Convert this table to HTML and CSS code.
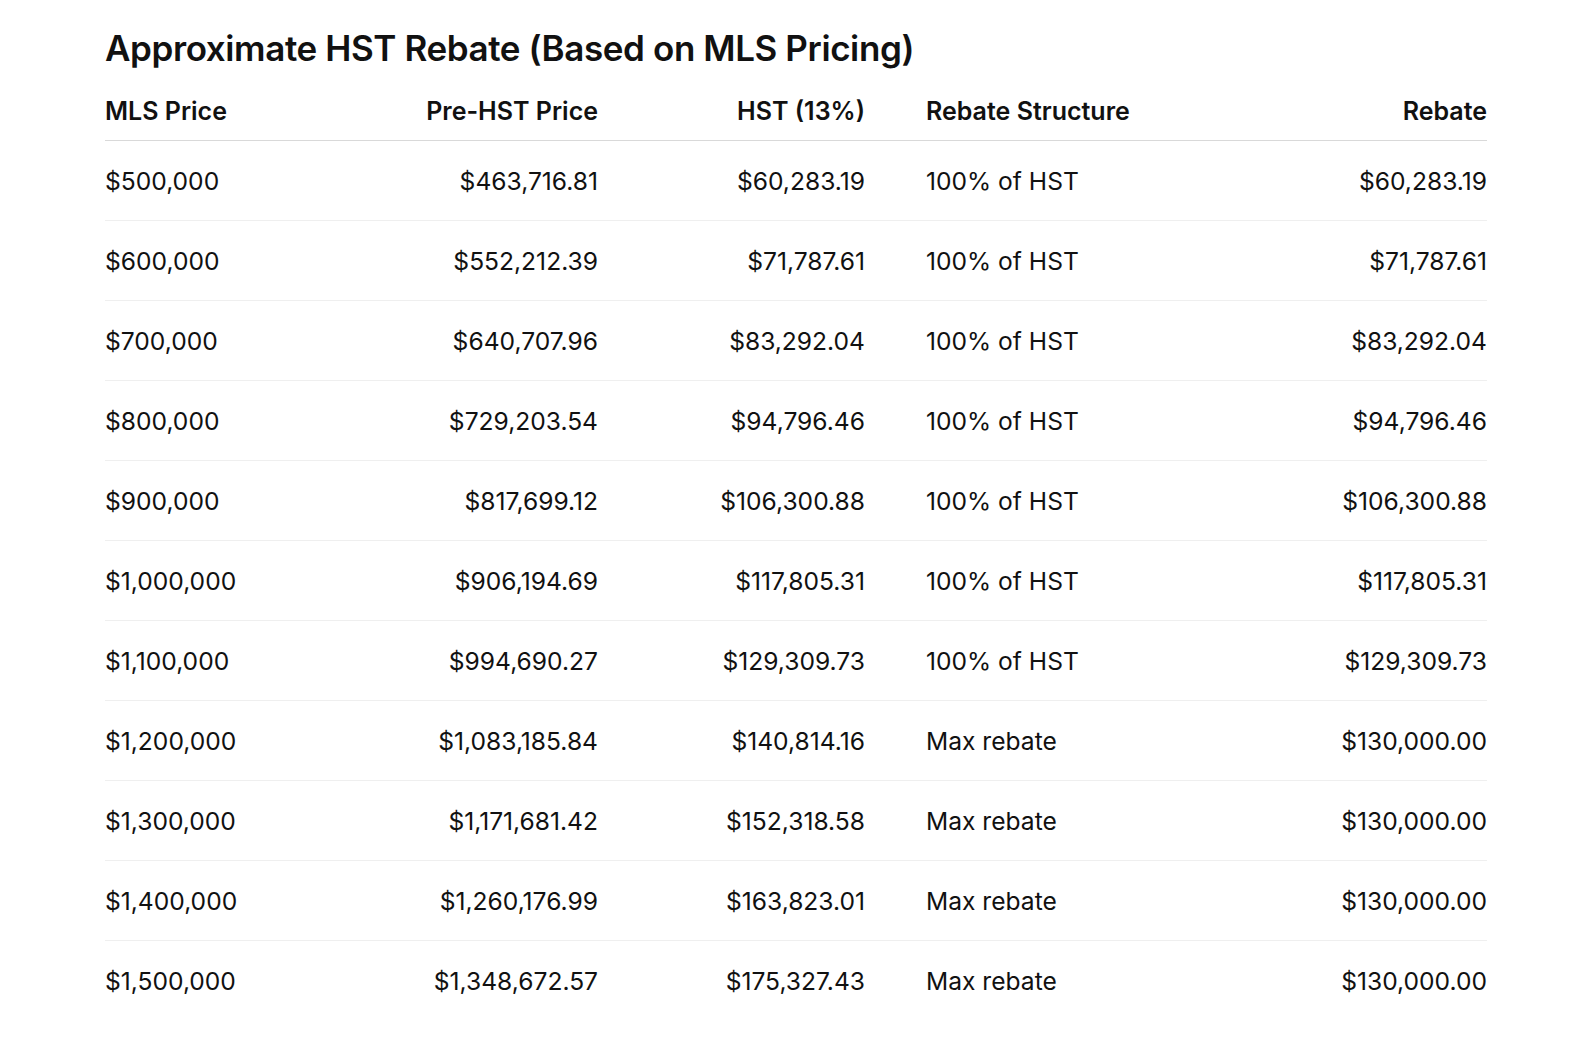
FILE: index.html
```html
<!DOCTYPE html>
<html lang="en">
<head>
<meta charset="utf-8">
<title>Approximate HST Rebate</title>
<link rel="stylesheet" href="styles.css">
</head>
<body>
<main class="page">
  <h1 class="title">Approximate HST Rebate (Based on MLS Pricing)</h1>
  <table class="rebate-table">
    <colgroup>
      <col class="c1"><col class="c2"><col class="c3"><col class="c4"><col class="c5">
    </colgroup>
    <thead>
      <tr>
        <th class="left">MLS Price</th>
        <th class="right">Pre-HST Price</th>
        <th class="right">HST (13%)</th>
        <th class="left struct">Rebate Structure</th>
        <th class="right">Rebate</th>
      </tr>
    </thead>
    <tbody>
      <tr><td class="left">$500,000</td><td class="right">$463,716.81</td><td class="right">$60,283.19</td><td class="left struct">100% of HST</td><td class="right">$60,283.19</td></tr>
      <tr><td class="left">$600,000</td><td class="right">$552,212.39</td><td class="right">$71,787.61</td><td class="left struct">100% of HST</td><td class="right">$71,787.61</td></tr>
      <tr><td class="left">$700,000</td><td class="right">$640,707.96</td><td class="right">$83,292.04</td><td class="left struct">100% of HST</td><td class="right">$83,292.04</td></tr>
      <tr><td class="left">$800,000</td><td class="right">$729,203.54</td><td class="right">$94,796.46</td><td class="left struct">100% of HST</td><td class="right">$94,796.46</td></tr>
      <tr><td class="left">$900,000</td><td class="right">$817,699.12</td><td class="right">$106,300.88</td><td class="left struct">100% of HST</td><td class="right">$106,300.88</td></tr>
      <tr><td class="left">$1,000,000</td><td class="right">$906,194.69</td><td class="right">$117,805.31</td><td class="left struct">100% of HST</td><td class="right">$117,805.31</td></tr>
      <tr><td class="left">$1,100,000</td><td class="right">$994,690.27</td><td class="right">$129,309.73</td><td class="left struct">100% of HST</td><td class="right">$129,309.73</td></tr>
      <tr><td class="left">$1,200,000</td><td class="right">$1,083,185.84</td><td class="right">$140,814.16</td><td class="left struct">Max rebate</td><td class="right">$130,000.00</td></tr>
      <tr><td class="left">$1,300,000</td><td class="right">$1,171,681.42</td><td class="right">$152,318.58</td><td class="left struct">Max rebate</td><td class="right">$130,000.00</td></tr>
      <tr><td class="left">$1,400,000</td><td class="right">$1,260,176.99</td><td class="right">$163,823.01</td><td class="left struct">Max rebate</td><td class="right">$130,000.00</td></tr>
      <tr><td class="left">$1,500,000</td><td class="right">$1,348,672.57</td><td class="right">$175,327.43</td><td class="left struct">Max rebate</td><td class="right">$130,000.00</td></tr>
    </tbody>
  </table>
</main>
</body>
</html>
```

FILE: styles.css
```css
html, body {
  margin: 0;
  padding: 0;
  background: #ffffff;
}

body {
  font-family: Inter, "Noto Sans", "Liberation Sans", sans-serif;
  color: #111111;
}

.page {
  padding: 27px 97px 0 105px;
}

.title {
  margin: 0 0 14px 0;
  font-size: 35px;
  line-height: 42px;
  font-weight: 600;
  letter-spacing: -0.4px;
  color: #111111;
}

.rebate-table {
  width: 1382px;
  border-collapse: collapse;
  table-layout: fixed;
  font-size: 24.6px;
}

.c1 { width: 240px; }
.c2 { width: 253px; }
.c3 { width: 267px; }
.c4 { width: 350px; }
.c5 { width: 272px; }

.rebate-table th,
.rebate-table td {
  padding: 0;
  line-height: 36px;
  white-space: nowrap;
}

.rebate-table th {
  font-size: 25px;
  font-weight: 600;
  padding-top: 10px;
  padding-bottom: 11px;
  border-bottom: 1px solid #d9d9d9;
}

.rebate-table td {
  font-weight: 400;
  padding-top: 22px;
  padding-bottom: 21px;
  border-bottom: 1px solid #efefef;
}

.rebate-table tbody tr:last-child td {
  border-bottom: none;
}

.left { text-align: left; }
.right { text-align: right; }

.rebate-table .struct {
  padding-left: 61px;
}
```
